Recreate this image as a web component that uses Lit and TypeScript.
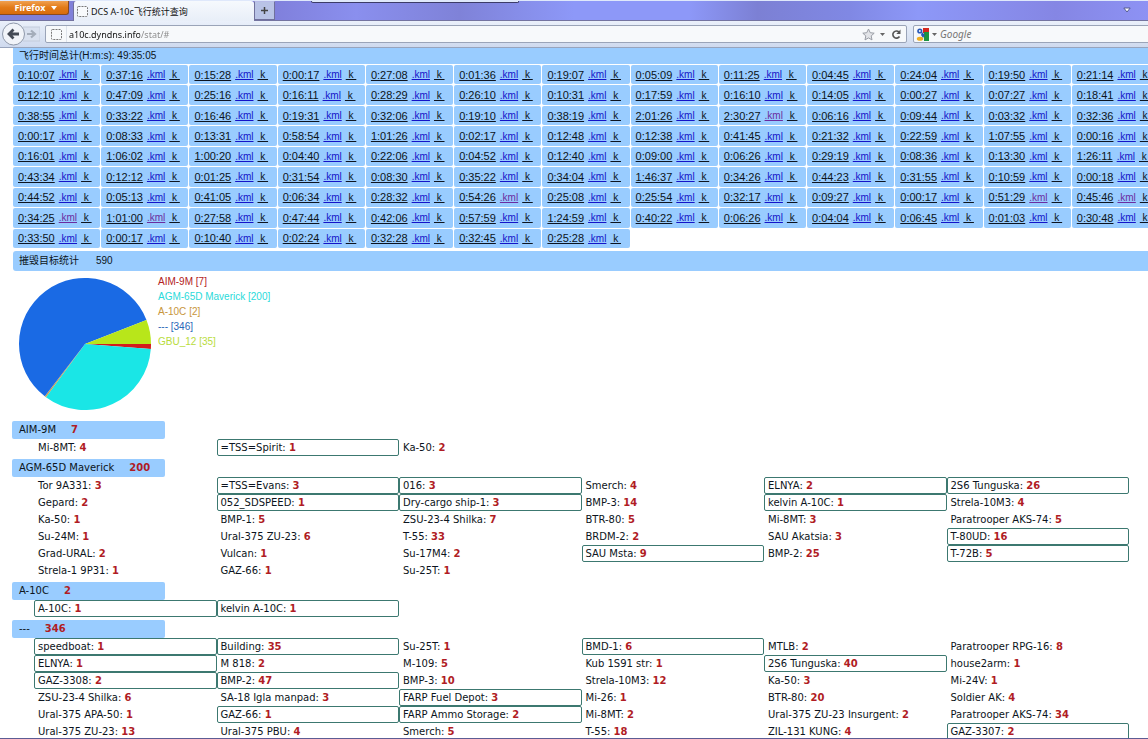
import { LitElement, html, svg, css } from "lit";
import { customElement, property } from "lit/decorators.js";
import { classMap } from "lit/directives/class-map.js";

// Sortie durations, thirteen to a row. A trailing * marks a visited .kml link.
const FLIGHTS = `
0:10:07 0:37:16 0:15:28 0:00:17 0:27:08 0:01:36 0:19:07 0:05:09 0:11:25 0:04:45 0:24:04 0:19:50 0:21:14
0:12:10 0:47:09 0:25:16 0:16:11 0:28:29 0:26:10 0:10:31 0:17:59 0:16:10 0:14:05 0:00:27 0:07:27 0:18:41
0:38:55 0:33:22 0:16:46 0:19:31 0:32:06 0:19:10 0:38:19 2:01:26 2:30:27* 0:06:16 0:09:44 0:03:32 0:32:36
0:00:17 0:08:33 0:13:31 0:58:54 1:01:26 0:02:17 0:12:48 0:12:38 0:41:45 0:21:32 0:22:59 1:07:55 0:00:16
0:16:01 1:06:02 1:00:20 0:04:40 0:22:06 0:04:52 0:12:40 0:09:00 0:06:26 0:29:19 0:08:36 0:13:30 1:26:11
0:43:34 0:12:12 0:01:25 0:31:54 0:08:30 0:35:22 0:34:04 1:46:37 0:34:26 0:44:23 0:31:55 0:10:59 0:00:18
0:44:52 0:05:13 0:41:05 0:06:34 0:28:32 0:54:26* 0:25:08 0:25:54 0:32:17 0:09:27 0:00:17 0:51:29* 0:45:46*
0:34:25* 1:01:00* 0:27:58 0:47:44 0:42:06 0:57:59 1:24:59 0:40:22 0:06:26 0:04:04 0:06:45 0:01:03 0:30:48
0:33:50 0:00:17 0:10:40 0:02:24 0:32:28 0:32:45 0:25:28`
  .trim()
  .split(/\s+/);

interface Slice {
  label: string;
  count: number;
  color: string;
  text: string;
}

const SLICES: Slice[] = [
  { label: "AIM-9M", count: 7, color: "#d41c1c", text: "#b22222" },
  { label: "AGM-65D Maverick", count: 200, color: "#1ae6e6", text: "#2adada" },
  { label: "A-10C", count: 2, color: "#c9a050", text: "#c8963c" },
  { label: "---", count: 346, color: "#1a6ae4", text: "#2a68b8" },
  { label: "GBU_12", count: 35, color: "#b8e61a", text: "#b8dc3c" },
];

// [name, kills, outlined]
type Target = [string, number, boolean?];

const WEAPONS: { name: string; total: number; targets: Target[] }[] = [
  { name: "AIM-9M", total: 7, targets: [["Mi-8MT", 4], ["=TSS=Spirit", 1, true], ["Ka-50", 2]] },
  {
    name: "AGM-65D Maverick",
    total: 200,
    targets: [
      ["Tor 9A331", 3], ["=TSS=Evans", 3, true], ["016", 3, true], ["Smerch", 4], ["ELNYA", 2, true], ["2S6 Tunguska", 26, true],
      ["Gepard", 2], ["052_SDSPEED", 1, true], ["Dry-cargo ship-1", 3, true], ["BMP-3", 14], ["kelvin A-10C", 1, true], ["Strela-10M3", 4],
      ["Ka-50", 1], ["BMP-1", 5], ["ZSU-23-4 Shilka", 7], ["BTR-80", 5], ["Mi-8MT", 3], ["Paratrooper AKS-74", 5],
      ["Su-24M", 1], ["Ural-375 ZU-23", 6], ["T-55", 33], ["BRDM-2", 2], ["SAU Akatsia", 3], ["T-80UD", 16, true],
      ["Grad-URAL", 2], ["Vulcan", 1], ["Su-17M4", 2], ["SAU Msta", 9, true], ["BMP-2", 25], ["T-72B", 5, true],
      ["Strela-1 9P31", 1], ["GAZ-66", 1], ["Su-25T", 1],
    ],
  },
  { name: "A-10C", total: 2, targets: [["A-10C", 1, true], ["kelvin A-10C", 1, true]] },
  {
    name: "---",
    total: 346,
    targets: [
      ["speedboat", 1, true], ["Building", 35, true], ["Su-25T", 1], ["BMD-1", 6, true], ["MTLB", 2], ["Paratrooper RPG-16", 8],
      ["ELNYA", 1, true], ["M 818", 2], ["M-109", 5], ["Kub 1S91 str", 1], ["2S6 Tunguska", 40, true], ["house2arm", 1],
      ["GAZ-3308", 2, true], ["BMP-2", 47, true], ["BMP-3", 10], ["Strela-10M3", 12], ["Ka-50", 3], ["Mi-24V", 1],
      ["ZSU-23-4 Shilka", 6], ["SA-18 Igla manpad", 3], ["FARP Fuel Depot", 3, true], ["Mi-26", 1], ["BTR-80", 20], ["Soldier AK", 4],
      ["Ural-375 APA-50", 1], ["GAZ-66", 1, true], ["FARP Ammo Storage", 2, true], ["Mi-8MT", 2], ["Ural-375 ZU-23 Insurgent", 2], ["Paratrooper AKS-74", 34],
      ["Ural-375 ZU-23", 13], ["Ural-375 PBU", 4], ["Smerch", 5], ["T-55", 18], ["ZIL-131 KUNG", 4], ["GAZ-3307", 2, true],
    ],
  },
];

@customElement("browser-chrome")
class BrowserChrome extends LitElement {
  static styles = css`
    :host {
      display: block;
      flex: none;
      font-family: "Noto Sans", "Noto Sans CJK SC", sans-serif;
    }
    button, input {
      font: inherit;
      margin: 0;
      padding: 0;
      border: 0;
      background: none;
      outline: none;
    }
    button { display: flex; align-items: center; justify-content: center; }
    svg { display: block; flex: none; }
    .strip {
      display: flex;
      height: 21px;
      box-sizing: border-box;
      border-top: 1px solid #dfe8fb;
      border-bottom: 1px solid #7474a0;
      background: linear-gradient(90deg, #8080d8 0, #8080dc 24%, #8a8fee 31%, #7f82d8 40%, #8d98f8 50%, #8d98f8 60%, #7c80d4 66%, #8088e4 74%, #8d98f8 80%, #8586e4 92%, #8d92f4 100%);
    }
    .firefox {
      width: 69px;
      height: 14px;
      gap: 6px;
      padding-left: 4px;
      box-sizing: border-box;
      border: 1px solid #8a4a20;
      border-top: 0;
      border-left: 0;
      border-radius: 0 0 3px 0;
      background: linear-gradient(#f0a050, #e27a18 50%, #d86c0c);
      color: #fff;
      font-size: 9px;
      font-weight: 700;
      line-height: 12px;
    }
    .tab {
      display: flex;
      align-items: center;
      gap: 3px;
      width: 181px;
      height: 20px;
      margin-left: 4px;
      padding-left: 3px;
      box-sizing: border-box;
      border-left: 1px solid #70709c;
      border-radius: 3px 3px 0 0;
      background: linear-gradient(#f6f9fd, #e8eef8);
      color: #111;
      font-size: 9px;
      white-space: nowrap;
    }
    .plus {
      width: 21px;
      height: 19px;
      box-sizing: border-box;
      border: 1px solid #70709c;
      border-top-color: #b8bce8;
      background: #b9c3e6;
    }
    .hidden-panel {
      width: 208px;
      height: 2px;
      margin-left: 36px;
      box-sizing: border-box;
      border: 1px solid #3c3c68;
      border-top: 0;
      border-radius: 0 0 3px 3px;
      background: #dfe8fb;
    }
    .list { margin-left: auto; width: 16px; height: 18px; margin-right: 13px; }
    .bar {
      display: flex;
      align-items: center;
      height: 27px;
      box-sizing: border-box;
      border-bottom: 1px solid #98a4bc;
      background: linear-gradient(#eaf0fa, #cfdaee);
    }
    .nav { width: 40px; height: 26px; }
    .field {
      display: flex;
      align-items: center;
      height: 18px;
      box-sizing: border-box;
      border: 1px solid #9aa4b8;
      border-radius: 2px;
      background: #f7f9fb;
    }
    .address { flex: 1; margin-left: 5px; }
    .identity { width: 21px; height: 16px; border-right: 1px solid #dde2ea; }
    .address input {
      flex: 1;
      min-width: 0;
      height: 16px;
      padding-left: 2px;
      font-size: 9px;
      color: transparent;
      background: linear-gradient(90deg, #111 73px, #888 73px);
      -webkit-background-clip: text;
      background-clip: text;
    }
    .tools { display: flex; align-items: center; gap: 5px; margin-right: 3px; }
    .search { width: 245px; margin: 0 -10px 0 6px; gap: 3px; padding-left: 2px; }
    .search input { flex: 1; min-width: 0; height: 16px; font-size: 10px; }
    .search input::placeholder { color: #777; font-style: italic; opacity: 1; }
    .engine { gap: 3px; }
  `;

  private blank = svg`<rect x=".5" y=".5" width="10" height="10" rx="1" fill="#f8fafc" stroke="#777" stroke-dasharray="2 1"/>`;
  private down = html`<svg width="5" height="3" viewBox="0 0 5 3"><path d="M0 0h5L2.500 3z" fill="#666" /></svg>`;

  render() {
    return html`
      <div class="strip">
        <button class="firefox">
          Firefox<svg width="6" height="4" viewBox="0 0 6 4"><path d="M0 0h6L3 4z" fill="#fff" /></svg>
        </button>
        <div class="tab">
          <svg width="11" height="11" viewBox="0 0 11 11">${this.blank}</svg>
          <span>DCS A-10c飞行统计查询</span>
        </div>
        <button class="plus" aria-label="New tab">
          <svg width="9" height="9" viewBox="0 0 9 9"><path d="M4.500 1v7M1 4.500h7" stroke="#444" stroke-width="1.500" /></svg>
        </button>
        <div class="hidden-panel"></div>
        <button class="list" aria-label="List all tabs">
          <svg width="8" height="6" viewBox="0 0 8 6"><path d="M.8 1h6.400L4 5z" fill="#fff" stroke="#555a90" /></svg>
        </button>
      </div>
      <div class="bar">
        <button class="nav" aria-label="Back and forward">
          <svg width="40" height="26" viewBox="0 0 40 26">
            <path d="M23 6h17v14H23" fill="#d9e1ef" stroke="#c3ccdc" />
            <circle cx="13.500" cy="13" r="11" fill="#f1f4f9" stroke="#8e98aa" />
            <path d="M13.500 8.500L9 13l4.500 4.500M9.500 13H19" fill="none" stroke="#444a55" stroke-width="2.800" />
            <path d="M31 9.500l4 3.500-4 3.500M34 13h-7" fill="none" stroke="#a4adba" stroke-width="2.200" />
          </svg>
        </button>
        <div class="field address">
          <button class="identity" aria-label="Site identity">
            <svg width="11" height="11" viewBox="0 0 11 11">${this.blank}</svg>
          </button>
          <input aria-label="Address" .value=${"a10c.dyndns.info/stat/#"} />
          <div class="tools">
            <button aria-label="Bookmark">
              <svg width="13" height="13" viewBox="0 0 13 13">
                <path d="M6.500 1l1.700 3.700 4 .5-3 2.700.8 4-3.500-2-3.500 2 .8-4-3-2.700 4-.5z" fill="#e2e4e8" stroke="#9a9ea6" />
              </svg>
            </button>
            <button aria-label="Show history">${this.down}</button>
            <button aria-label="Reload">
              <svg width="13" height="11" viewBox="0 0 13 11">
                <path d="M9 3A3.600 3.600 0 1 0 9.500 7.500" fill="none" stroke="#555" stroke-width="1.600" />
                <path d="M10.500 .5v4.500H6.300z" fill="#555" />
              </svg>
            </button>
          </div>
        </div>
        <div class="field search">
          <button class="engine" aria-label="Search engine">
            <svg width="13" height="13" viewBox="0 0 13 13">
              <rect width="13" height="13" fill="#f4f6fa" />
              <path d="M7 0h6v5H7z" fill="#d5281e" />
              <path d="M8 4h5v9H8z" fill="#1c9440" />
              <circle cx="3.800" cy="3" r="2.600" fill="#2758b8" />
              <circle cx="3.800" cy="3" r="1" fill="#f4f6fa" />
              <path d="M6 4l3 3-2 3-2-3z" fill="#2758b8" />
              <ellipse cx="4" cy="10.800" rx="3.200" ry="2" fill="#efae22" />
            </svg>
            ${this.down}
          </button>
          <input aria-label="Search" placeholder="Google" />
        </div>
      </div>
    `;
  }
}

@customElement("kill-pie")
class KillPie extends LitElement {
  @property({ attribute: false }) slices: Slice[] = [];

  static styles = css`
    :host { display: flex; gap: 7px; padding: 7px 0 11px 7px; }
    .pie { display: block; flex: none; }
    .legend {
      margin: -4px 0 0;
      padding: 0;
      list-style: none;
      font-size: 10px;
      line-height: 15px;
    }
  `;

  render() {
    const total = this.slices.reduce((n, s) => n + s.count, 0);
    let start = 0;
    const wedges = this.slices.map((s) => {
      const end = start + (s.count / total) * Math.PI * 2;
      const at = (a: number) => `${66 + 66 * Math.cos(a)} ${66 + 66 * Math.sin(a)}`;
      const d = `M66 66L${at(start)}A66 66 0 ${end - start > Math.PI ? 1 : 0} 1 ${at(end)}z`;
      start = end;
      return svg`<path d=${d} fill=${s.color} />`;
    });
    return html`
      <svg class="pie" width="132" height="132" viewBox="0 0 132 132" role="img" aria-label="590">${wedges}</svg>
      <ul class="legend">
        ${this.slices.map((s) => html`<li style="color:${s.text}">${s.label} [${s.count}]</li>`)}
      </ul>
    `;
  }
}

@customElement("app-root")
class AppRoot extends LitElement {
  static styles = css`
    :host {
      display: flex;
      flex-direction: column;
      height: 100vh;
      box-sizing: border-box;
      overflow: hidden;
      border-bottom: 1px solid #5c5c94;
      background: #fff;
      color: #0c1420;
      font-family: "Liberation Sans", "Noto Sans CJK SC", sans-serif;
    }
    .page { flex: 1; min-height: 0; overflow: hidden; padding-left: 12px; }
    .title {
      margin: 0 0 0 1px;
      padding-left: 6px;
      background: #99ccff;
      font-size: 10px;
      font-weight: 400;
      line-height: 16px;
    }
    .destroyed {
      display: flex;
      gap: 17px;
      margin-top: 3px;
      border-radius: 3px 0 0 3px;
      line-height: 20px;
    }
    .flights {
      display: grid;
      grid-template-columns: repeat(13, 1fr);
      grid-auto-rows: 1fr;
      gap: 1px;
      min-height: 183px;
      margin: 1px -11px 0 1px;
    }
    .flight {
      display: flex;
      align-items: center;
      gap: 4px;
      padding-left: 5px;
      border-radius: 2px;
      background: #99ccff;
      font-size: 10px;
      white-space: pre;
    }
    .flight a { color: #0c1420; text-decoration: underline; }
    .flight .time { font-size: 11px; }
    .flight .kml { color: #1414c8; }
    .flight .visited { color: #6a2ca0; }
    .weapon { margin-bottom: 3px; font-family: "DejaVu Sans", sans-serif; font-size: 10px; }
    .weapon-name {
      display: flex;
      gap: 15px;
      width: 146px;
      margin: 0;
      padding-left: 7px;
      border-radius: 2px;
      background: #99ccff;
      font-size: 10px;
      font-weight: 400;
      line-height: 18px;
    }
    .count { color: #b01c24; font-weight: 700; }
    .targets {
      display: grid;
      grid-template-columns: repeat(6, 1fr);
      margin: 0 19px 0 22px;
      padding: 0;
      list-style: none;
    }
    .target {
      padding-left: 3px;
      border: 1px solid transparent;
      border-radius: 2px;
      line-height: 15px;
      white-space: nowrap;
    }
    .outlined { border-color: #3c7870; }
  `;

  render() {
    return html`
      <browser-chrome></browser-chrome>
      <main class="page">
        <h2 class="title">飞行时间总计(H:m:s): 49:35:05</h2>
        <div class="flights">
          ${FLIGHTS.map((f) => {
            const visited = f.endsWith("*");
            return html`<div class="flight"><a class="time" href="#">${f.replace("*", "")}</a><a class=${classMap({ kml: true, visited })} href="#">.kml</a><a href="#"> k </a></div>`;
          })}
        </div>
        <h2 class="title destroyed"><span>摧毁目标统计</span><span>590</span></h2>
        <kill-pie .slices=${SLICES}></kill-pie>
        ${WEAPONS.map(
          (w) => html`
            <section class="weapon">
              <h3 class="weapon-name"><span>${w.name}</span><span class="count">${w.total}</span></h3>
              <ul class="targets">
                ${w.targets.map(
                  ([name, kills, outlined]) => html`<li class=${classMap({ target: true, outlined: !!outlined })}>${name}: <span class="count">${kills}</span></li>`
                )}
              </ul>
            </section>
          `
        )}
      </main>
    `;
  }
}
